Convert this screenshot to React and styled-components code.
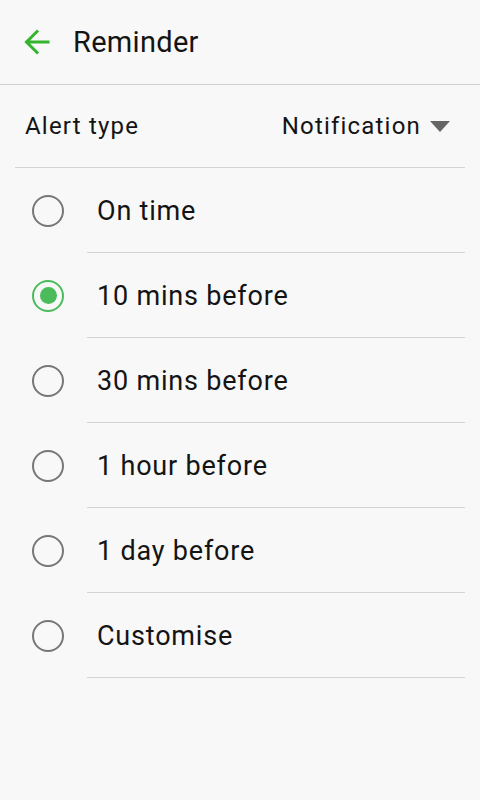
import React from 'react';
import styled, { createGlobalStyle } from 'styled-components';

const GlobalStyle = createGlobalStyle`
  html, body {
    margin: 0;
    padding: 0;
    background: #f8f8f8;
    font-family: Roboto, "Noto Sans", sans-serif;
    color: #141414;
  }
`;

const Page = styled.div`
  width: 480px;
  min-height: 800px;
  background: #f8f8f8;
`;

const Header = styled.div`
  display: flex;
  align-items: center;
  height: 84px;
  padding-left: 22px;
  border-bottom: 1px solid #cfcfcf;
`;

const BackButton = styled.button`
  display: flex;
  align-items: center;
  justify-content: center;
  width: 30px;
  height: 30px;
  padding: 0;
  border: none;
  background: none;
  cursor: pointer;
`;

const Title = styled.h1`
  margin: 0 0 0 21px;
  font-size: 29px;
  font-weight: 400;
  letter-spacing: 0.3px;
`;

const AlertRow = styled.div`
  display: flex;
  align-items: center;
  justify-content: space-between;
  height: 82px;
  margin: 0 15px;
  padding: 0 15px 0 10px;
  border-bottom: 1px solid #d4d4d4;
  font-size: 24px;
  letter-spacing: 1.2px;
`;

const Select = styled.div`
  display: flex;
  align-items: center;
  gap: 9px;
`;

const Caret = styled.span`
  width: 0;
  height: 0;
  border-left: 10.5px solid transparent;
  border-right: 10.5px solid transparent;
  border-top: 11px solid #666;
  margin-top: 1px;
`;

const Option = styled.label`
  display: flex;
  height: 85px;
  cursor: pointer;
`;

const RadioCell = styled.div`
  display: flex;
  align-items: center;
  width: 87px;
  padding-left: 32px;
  box-sizing: border-box;
`;

const Radio = styled.span`
  display: flex;
  align-items: center;
  justify-content: center;
  width: 32px;
  height: 32px;
  box-sizing: border-box;
  border-radius: 50%;
  border: 2.5px solid ${p => (p.checked ? '#4cbb5c' : '#777')};

  &::after {
    content: '';
    display: ${p => (p.checked ? 'block' : 'none')};
    width: 17px;
    height: 17px;
    border-radius: 50%;
    background: #4cbb5c;
  }
`;

const Label = styled.div`
  flex: 1;
  display: flex;
  align-items: center;
  margin-right: 15px;
  padding-left: 10px;
  padding-top: 1px;
  border-bottom: 1px solid #d4d4d4;
  font-size: 27px;
  letter-spacing: 0.8px;
`;

const options = [
  'On time',
  '10 mins before',
  '30 mins before',
  '1 hour before',
  '1 day before',
  'Customise',
];

export default function App() {
  const [selected, setSelected] = React.useState(1);

  return (
    <Page>
      <GlobalStyle />
      <Header>
        <BackButton aria-label="Back">
          <svg width="28" height="28" viewBox="0 0 28 28" fill="none">
            <path d="M25 14H4M14 3.5L3.5 14L14 24.5" stroke="#33b52b" strokeWidth="3" strokeLinecap="square" />
          </svg>
        </BackButton>
        <Title>Reminder</Title>
      </Header>
      <AlertRow>
        <span>Alert type</span>
        <Select>
          <span>Notification</span>
          <Caret />
        </Select>
      </AlertRow>
      {options.map((o, i) => (
        <Option key={o} onClick={() => setSelected(i)}>
          <RadioCell>
            <Radio checked={selected === i} />
          </RadioCell>
          <Label>{o}</Label>
        </Option>
      ))}
    </Page>
  );
}
